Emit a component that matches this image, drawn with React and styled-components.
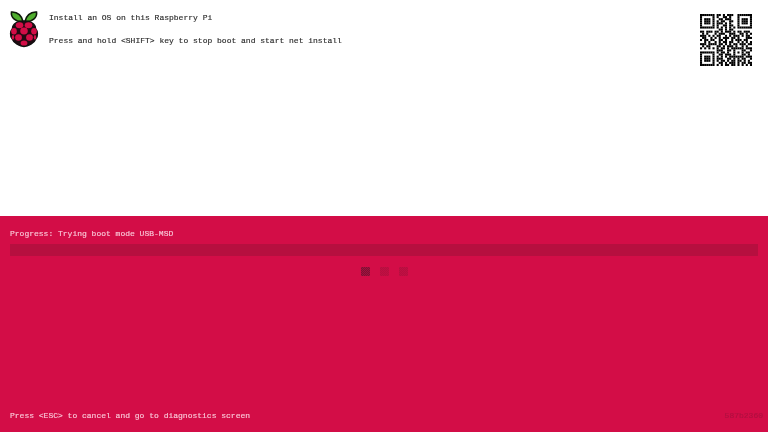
import React from 'react'
import styled, {createGlobalStyle} from 'styled-components'

const GlobalStyle = createGlobalStyle`
    html, body {
        margin: 0;
        padding: 0;
        background: #fff;
    }
`;

const Screen = styled.div`
    width: 768px;
    height: 432px;
    display: flex;
    flex-direction: column;
    overflow: hidden;
    font-family: "Liberation Mono", monospace;
    font-size: 8px;
    line-height: 10px;
    -webkit-text-stroke: 0.15px currentColor;
    filter: blur(0.4px);
`;

const Top = styled.div`
    height: 216px;
    display: flex;
    align-items: flex-start;
    background: #fff;
    color: #2b2b2b;
    padding: 10px 16px 0 9px;
    box-sizing: border-box;
`;

const Messages = styled.div`
    flex: 1;
    display: flex;
    flex-direction: column;
    gap: 13px;
    padding: 3px 0 0 10px;
`;

const QrBox = styled.div`
    margin-top: 4px;
`;

const Bottom = styled.div`
    flex: 1;
    display: flex;
    flex-direction: column;
    background: #d30d47;
    color: #f9c6d6;
    padding: 13px 10px 11px 10px;
    position: relative;
`;

const Bar = styled.div`
    height: 12px;
    margin-top: 5px;
    background: #b60f3f;
`;

const Dots = styled.div`
    display: flex;
    justify-content: center;
    gap: 10px;
    margin-top: 11px;
`;

const Dot = styled.div`
    width: 9px;
    height: 9px;
    background: repeating-conic-gradient(
        ${p => p.$on ? '#7a1236' : '#b5103f'} 0 25%,
        ${p => p.$on ? '#a6103c' : '#c20e43'} 0 50%
    ) 0 0 / 2px 2px;
`;

const Footer = styled.div`
    margin-top: auto;
`;

const Serial = styled.div`
    position: absolute;
    right: 5px;
    bottom: 11px;
    color: #b01040;
`;

const drupes = [
    [10.5, 14.8, 3.8, 3], [19.5, 14.8, 3.8, 3],
    [5, 20.8, 2.8, 3.2], [15, 20.5, 3.8, 3.4], [25, 20.8, 2.8, 3.2],
    [9.5, 27, 3.4, 3.2], [20.5, 27, 3.4, 3.2],
    [4, 26.8, 1.2, 2.4], [26, 26.8, 1.2, 2.4],
    [15, 32.5, 3.4, 2.6],
]

const Logo = () => (
    <svg width="30" height="38" viewBox="0 0 30 37">
        <path d="M14 11C13 6 9 1 2.500 1.500 1.500 7 7 12 14 11zM16 11c1-5 5-10 11.500-9.500 1 5.500-4.500 10.500-11.500 9.500z" fill="#4fae2e" stroke="#0d1a0a" strokeWidth="1.6" />
        <path d="M15 10.500C9 10.500 3.500 13 3.500 18 1 21 1 25.500 3 28c1.500 4.500 8 8 12 8s10.500-3.500 12-8c2-2.500 2-7-.5-10 0-5-5.500-7.500-11.500-7.500z" fill="#230a12" stroke="#111" strokeWidth="1.4" />
        {drupes.map(([cx, cy, rx, ry], i) => (
            <ellipse key={i} cx={cx} cy={cy} rx={rx} ry={ry} fill="#d30d47" />
        ))}
    </svg>
);

// data modules only, the three finder squares are worked out in isFinder
const qrTop = [
    '##.#.###.',
    '#..##.#..',
    '.##.###..',
    '#.##..##.',
    '###.#.#..',
    '#..##.##.',
    '#.#.#.#.#',
    '.##.#.##.',
]

const qrMiddle = [
    '##.###.##.#.###.#.##.###.',
    '.#.#...#.###..###..##.#.#',
    '###.#.#.##..#.#.###.#.##.',
    '.##..#.#.#.###.##.#...###',
    '#.##.##..##.#..#.###.##..',
    '..#.#..#.#.##.##..#.#.#.#',
    '###.####.##.#.#.##.###.##',
    '.#.##...##.#.###.#..#.#..',
    '#.#.#.#.#.##.#.######.###',
]

const qrBottom = [
    '###..##.#...##..#',
    '#.##.#..#.#.#.##.',
    '.##.###.#...##.#.',
    '#.#.#.#######.###',
    '###..##.#.#.##..#',
    '#.##.#.##.##.#.#.',
    '.##.#.###.#.##.##',
    '#.#.##.##.#.#.#.#',
]

const qrRows = [
    ...qrTop.map(mid => '.'.repeat(8) + mid + '.'.repeat(8)),
    ...qrMiddle,
    ...qrBottom.map(rest => '.'.repeat(8) + rest),
]

const isFinder = (x, y, ox, oy) => {
    const dx = x - ox
    const dy = y - oy
    if(dx < 0 || dy < 0 || dx > 6 || dy > 6) return false
    return dx === 0 || dy === 0 || dx === 6 || dy === 6 || (dx > 1 && dx < 5 && dy > 1 && dy < 5)
}

const Qr = () => (
    <svg width="52" height="52" viewBox="0 0 25 25">
        {qrRows.map((row, y) => [...row].map((c, x) => (
            c === '#' || isFinder(x, y, 0, 0) || isFinder(x, y, 18, 0) || isFinder(x, y, 0, 18)
                ? <rect key={x + '-' + y} x={x} y={y} width="1" height="1" fill="#000" />
                : null
        )))}
    </svg>
);

const App = () => (
    <Screen>
        <GlobalStyle />
        <Top>
            <Logo />
            <Messages>
                <div>Install an OS on this Raspberry Pi</div>
                <div>Press and hold &lt;SHIFT&gt; key to stop boot and start net install</div>
            </Messages>
            <QrBox>
                <Qr />
            </QrBox>
        </Top>
        <Bottom>
            <div>Progress: Trying boot mode USB-MSD</div>
            <Bar />
            <Dots>
                <Dot $on />
                <Dot />
                <Dot />
            </Dots>
            <Footer>Press &lt;ESC&gt; to cancel and go to diagnostics screen</Footer>
            <Serial>587b2360</Serial>
        </Bottom>
    </Screen>
)

export default App;
